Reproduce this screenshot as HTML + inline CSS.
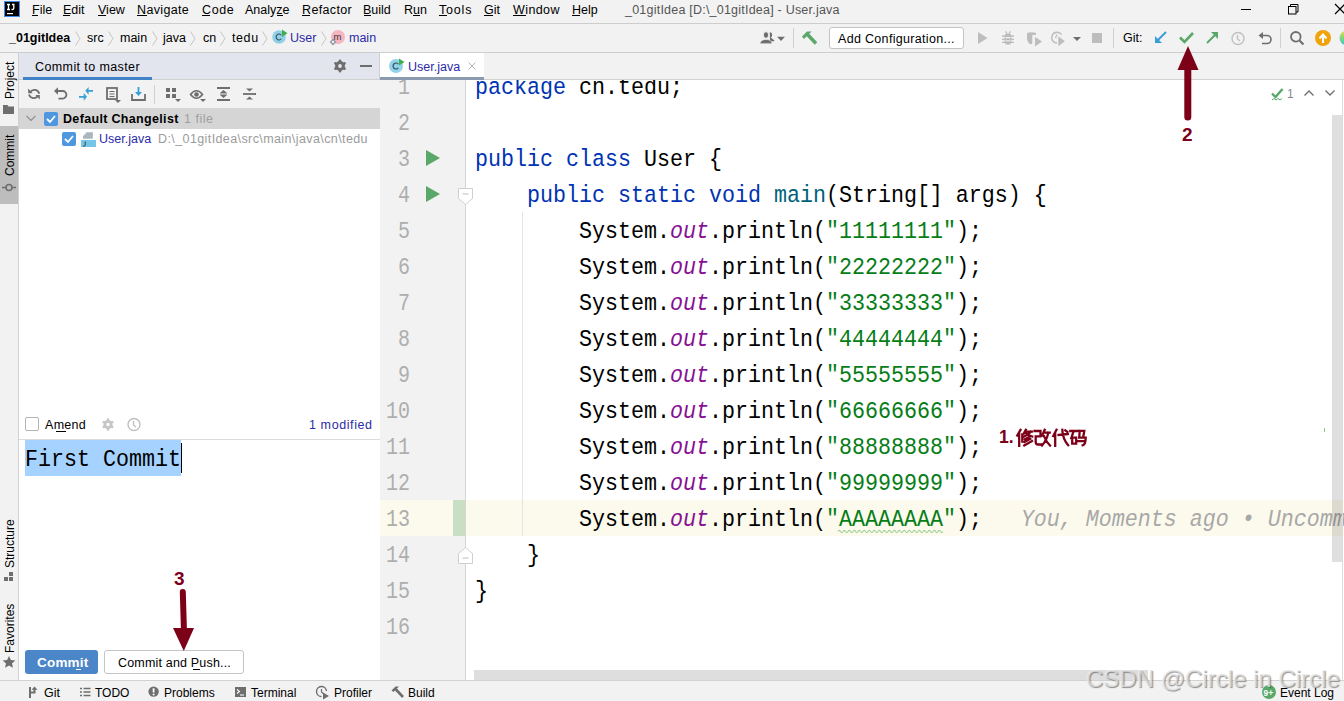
<!DOCTYPE html>
<html><head><meta charset="utf-8">
<style>
*{margin:0;padding:0;box-sizing:border-box}
html,body{width:1344px;height:701px;overflow:hidden;background:#f2f2f2;font-family:"Liberation Sans",sans-serif;font-size:12px;color:#000}
.a{position:absolute}
.t{position:absolute;white-space:pre;line-height:1}
svg{position:absolute;overflow:visible}
.ul{text-decoration:underline;text-underline-offset:2px}
.code{position:absolute;font-family:"Liberation Mono",monospace;font-size:21.67px;white-space:pre;line-height:36px;height:36px;transform:scaleY(1.1);transform-origin:0 23.8px}
.ln{position:absolute;left:379px;width:30px;text-align:right;color:#aeaeae;font-family:"Liberation Mono",monospace;font-size:20px;line-height:36px;height:36px;transform:scaleY(1.22);transform-origin:0 23.3px}
.kw{color:#0033b3}
.st{color:#067d17}
.it{color:#871094;font-style:italic}
</style></head><body>
<!-- menubar -->
<div class="a" style="left:0;top:0;width:1344px;height:24px;background:#f2f2f2;border-bottom:1px solid #cdcdcd"></div>
<div class="a" style="left:4px;top:1px;width:16px;height:16px;background:#000;border:1px solid #3c8cf0"></div>
<svg style="left:5px;top:2px" width="14" height="14"><path d="M2 2.5H5M3.5 2.5V7.5M2 7.5H5M7 2.5H9.5M8.8 2.5V6.3Q8.8 7.5 7.3 7.5H6.5" fill="none" stroke="#fff" stroke-width="1.3"/><rect x="2" y="11" width="6" height="1.2" fill="#fff"/></svg>
<div class="t" style="left:32px;top:4px;font-size:12.5px">File</div>
<div class="t" style="left:63px;top:4px;font-size:12.5px">Edit</div>
<div class="t" style="left:98px;top:4px;font-size:12.5px">View</div>
<div class="t" style="left:137px;top:4px;font-size:12.5px;letter-spacing:0.35px">Navigate</div>
<div class="t" style="left:202px;top:4px;font-size:12.5px;letter-spacing:0.6px">Code</div>
<div class="t" style="left:245px;top:4px;font-size:12.5px">Analyze</div>
<div class="t" style="left:302px;top:4px;font-size:12.5px;letter-spacing:0.35px">Refactor</div>
<div class="t" style="left:363px;top:4px;font-size:12.5px">Build</div>
<div class="t" style="left:404px;top:4px;font-size:12.5px">Run</div>
<div class="t" style="left:439px;top:4px;font-size:12.5px;letter-spacing:0.8px">Tools</div>
<div class="t" style="left:484px;top:4px;font-size:12.5px">Git</div>
<div class="t" style="left:513px;top:4px;font-size:12.5px;letter-spacing:0.4px">Window</div>
<div class="t" style="left:572px;top:4px;font-size:12.5px">Help</div>
<div class="t" style="left:625px;top:4px;font-size:12.5px;color:#555;letter-spacing:0.22px">_01gitIdea [D:\_01gitIdea] - User.java</div>
<div class="a" style="left:32px;top:15px;width:6px;height:1px;background:#000"></div><div class="a" style="left:63px;top:15px;width:7px;height:1px;background:#000"></div><div class="a" style="left:98px;top:15px;width:8px;height:1px;background:#000"></div><div class="a" style="left:137px;top:15px;width:10px;height:1px;background:#000"></div><div class="a" style="left:202px;top:15px;width:8px;height:1px;background:#000"></div><div class="a" style="left:277px;top:15px;width:6px;height:1px;background:#000"></div><div class="a" style="left:302px;top:15px;width:8px;height:1px;background:#000"></div><div class="a" style="left:364px;top:15px;width:7px;height:1px;background:#000"></div><div class="a" style="left:413px;top:15px;width:7px;height:1px;background:#000"></div><div class="a" style="left:439px;top:15px;width:8px;height:1px;background:#000"></div><div class="a" style="left:484px;top:15px;width:9px;height:1px;background:#000"></div><div class="a" style="left:513px;top:15px;width:13px;height:1px;background:#000"></div><div class="a" style="left:572px;top:15px;width:8px;height:1px;background:#000"></div>
<!-- window controls -->
<div class="a" style="left:1241px;top:9px;width:10px;height:1px;background:#000"></div>
<svg style="left:1288px;top:4px" width="11" height="11"><rect x="0.5" y="2.5" width="7.5" height="7.5" fill="none" stroke="#000"/><path d="M2.5 2.5V0.5h7.5v7.5h-2" fill="none" stroke="#000"/></svg>
<svg style="left:1335px;top:4px" width="12" height="12"><path d="M0 0L10 10M10 0L0 10" stroke="#000" stroke-width="1.2"/></svg>

<!-- nav bar -->
<div class="a" style="left:0;top:24px;width:1344px;height:29px;background:#f2f2f2;border-bottom:1px solid #cdcdcd"></div>
<div class="t" style="left:9px;top:32px;font-size:12.5px;font-weight:bold">_01gitIdea</div>
<div class="t" style="left:87px;top:32px;font-size:12.5px">src</div>
<div class="t" style="left:120px;top:32px;font-size:12.5px">main</div>
<div class="t" style="left:163px;top:32px;font-size:12.5px">java</div>
<div class="t" style="left:203px;top:32px;font-size:12.5px">cn</div>
<div class="t" style="left:232px;top:32px;font-size:12.5px;letter-spacing:0.6px">tedu</div>
<div class="t" style="left:290px;top:32px;font-size:12.5px;color:#2b2ba6">User</div>
<div class="t" style="left:349px;top:32px;font-size:12.5px;color:#2b2ba6">main</div>
<svg style="left:75px;top:31px" width="6" height="16"><path d="M0.5 0.5L5 7.5L0.5 14.5" fill="none" stroke="#c4c4c4"/></svg>
<svg style="left:108px;top:31px" width="6" height="16"><path d="M0.5 0.5L5 7.5L0.5 14.5" fill="none" stroke="#c4c4c4"/></svg>
<svg style="left:152px;top:31px" width="6" height="16"><path d="M0.5 0.5L5 7.5L0.5 14.5" fill="none" stroke="#c4c4c4"/></svg>
<svg style="left:190px;top:31px" width="6" height="16"><path d="M0.5 0.5L5 7.5L0.5 14.5" fill="none" stroke="#c4c4c4"/></svg>
<svg style="left:220px;top:31px" width="6" height="16"><path d="M0.5 0.5L5 7.5L0.5 14.5" fill="none" stroke="#c4c4c4"/></svg>
<svg style="left:262px;top:31px" width="6" height="16"><path d="M0.5 0.5L5 7.5L0.5 14.5" fill="none" stroke="#c4c4c4"/></svg>
<svg style="left:321px;top:31px" width="6" height="16"><path d="M0.5 0.5L5 7.5L0.5 14.5" fill="none" stroke="#c4c4c4"/></svg>
<svg style="left:272px;top:29px" width="16" height="16"><circle cx="7" cy="8" r="6.8" fill="#8fcfe8"/><path d="M9.2 6.2A2.8 3 0 1 0 9.2 9.8" fill="none" stroke="#3d4a55" stroke-width="1.1"/><path d="M10 0.5v7.5l5.5-3.7z" fill="#3fae4f"/></svg>
<svg style="left:330px;top:29px" width="16" height="16"><circle cx="8" cy="8" r="7" fill="#f5b4c0"/><text x="3.6" y="11" font-size="9.5" font-family="Liberation Sans" fill="#3a3a3a">m</text><path d="M3 10.5L5.5 13L3 15.5L0.5 13z" fill="#f2f2f2" stroke="#8f9aa5" stroke-width="1.3"/></svg>

<!-- right toolbar -->
<svg style="left:760px;top:31px" width="26" height="14"><path d="M9.8 1.2c1.6 0 2.4 1.3 2.3 2.9-.1 1.3-.7 2.2-1.2 2.6l3 2.2c.7.5.6 1.3-.2 1.3H10z" fill="#6e6e6e"/><ellipse cx="6" cy="4" rx="2.6" ry="3.3" fill="#6e6e6e" stroke="#f2f2f2" stroke-width="0.9"/><path d="M0 12.8c0-2.8 2.5-4.3 6-4.3s6 1.5 6 4.3z" fill="#6e6e6e" stroke="#f2f2f2" stroke-width="0.7"/><path d="M17 5.7h8l-4 4.3z" fill="#6e6e6e"/></svg>
<div class="a" style="left:793px;top:28px;width:1px;height:20px;background:#d0d0d0"></div>
<svg style="left:801px;top:30px" width="17" height="16"><path d="M1 6.5L6 1.5H10.5L9.5 2.5L7.5 4.5L5.5 6.5L3 9z" fill="#59a869"/><path d="M6.5 4.5L15 13.5" stroke="#59a869" stroke-width="3.4"/></svg>
<div class="a" style="left:829px;top:27px;width:135px;height:22px;background:#fff;border:1px solid #c4c4c4;border-radius:3px"></div>
<div class="t" style="left:838px;top:33px;font-size:12.5px;letter-spacing:0.32px">Add Configuration...</div>
<svg style="left:978px;top:32px" width="10" height="12"><path d="M0 0v12l9.5-6z" fill="#bdbdbd"/></svg>
<svg style="left:1002px;top:31px" width="12" height="14"><path d="M3.5 0.3L5 3M8.5 0.3L7 3" stroke="#bdbdbd" stroke-width="1.2"/><rect x="2.5" y="2.5" width="7" height="11.3" rx="3.2" fill="#bdbdbd"/><path d="M0 5h12M0 8.3h12M0 11.4h12" stroke="#bdbdbd" stroke-width="1.3"/><path d="M3.5 6.6h5M3.5 9.8h5" stroke="#f2f2f2" stroke-width="1.1"/></svg>
<svg style="left:1026px;top:32px" width="17" height="15"><path d="M1 1Q5.5 -0.5 10 1V3H6.3V11.5L4.5 12.5Q1 10 1 6z" fill="#bdbdbd"/><path d="M9 5v9.5l7-5z" fill="#bdbdbd"/></svg>
<svg style="left:1050px;top:30px" width="32" height="18"><path d="M11.6 4.6A5.4 5.4 0 1 0 7 13" fill="none" stroke="#bdbdbd" stroke-width="1.5"/><path d="M7 4.6L5.5 8" stroke="#bdbdbd" stroke-width="1.2" fill="none"/><path d="M8.3 6.3v10l6.6-5z" fill="#bdbdbd"/><path d="M23 7h8l-4 4z" fill="#6e6e6e"/></svg>
<div class="a" style="left:1092px;top:33px;width:10px;height:10px;background:#bdbdbd"></div>
<div class="a" style="left:1113px;top:28px;width:1px;height:20px;background:#d0d0d0"></div>
<div class="t" style="left:1123px;top:32px;font-size:12.5px">Git:</div>
<svg style="left:1154px;top:31px" width="14" height="13"><path d="M12 1L2 11" stroke="#389fd6" stroke-width="2"/><path d="M1 5v7h7z" fill="#389fd6"/></svg>
<svg style="left:1179px;top:31px" width="15" height="13"><path d="M1 6.5l4.5 4.5L14 2" fill="none" stroke="#59a869" stroke-width="2.6"/></svg>
<svg style="left:1206px;top:31px" width="13" height="13"><path d="M1 12L11 2" stroke="#59a869" stroke-width="2"/><path d="M5 1h7v7z" fill="#59a869"/></svg>
<svg style="left:1231px;top:31px" width="15" height="15"><circle cx="7" cy="7.5" r="6" fill="none" stroke="#c0c0c0" stroke-width="1.4"/><path d="M6.5 4v4l2.5 2" stroke="#c0c0c0" stroke-width="1.4" fill="none"/></svg>
<svg style="left:1258px;top:31px" width="14" height="15"><path d="M4 4.5h5a4 4 0 010 8H4" fill="none" stroke="#6e6e6e" stroke-width="1.6"/><path d="M0.5 4.5L5 1v7z" fill="#6e6e6e"/></svg>
<div class="a" style="left:1280px;top:28px;width:1px;height:20px;background:#d0d0d0"></div>
<svg style="left:1290px;top:31px" width="15" height="15"><circle cx="5.8" cy="5.8" r="4.8" fill="none" stroke="#6e6e6e" stroke-width="1.8"/><path d="M9.5 9.5L13.5 13.5" stroke="#6e6e6e" stroke-width="2.2"/></svg>
<svg style="left:1315px;top:30px" width="16" height="16"><circle cx="8" cy="8" r="8" fill="#f0a30a"/><path d="M8 13V5M4.5 8.5L8 4.5l3.5 4" stroke="#fff" stroke-width="2" fill="none"/></svg>
<svg style="left:1339px;top:30px" width="8" height="16"><defs><linearGradient id="rg" x1="0" y1="0" x2="0" y2="1"><stop offset="0" stop-color="#e8e04a"/><stop offset="0.5" stop-color="#7ed67a"/><stop offset="1" stop-color="#3cc6e0"/></linearGradient></defs><circle cx="8" cy="8" r="7.5" fill="url(#rg)"/></svg>

<!-- left strip -->
<div class="a" style="left:0;top:53px;width:19px;height:628px;background:#f2f2f2;border-right:1px solid #d1d1d1"></div>
<div class="a" style="left:0;top:126px;width:18px;height:78px;background:#bdbdbd"></div>
<div class="t" style="left:14px;top:61px;font-size:12px;transform-origin:0 0;transform:rotate(-90deg) translate(-38px,-10px)">Project</div>
<svg style="left:3px;top:105px" width="11" height="9"><path d="M0 0h4.5l1 1.5h5.5v7.5H0z" fill="#6e6e6e"/></svg>
<div class="t" style="left:14px;top:135px;font-size:12px;transform-origin:0 0;transform:rotate(-90deg) translate(-41px,-10px)">Commit</div>
<svg style="left:2px;top:183px" width="14" height="9"><circle cx="7" cy="4.5" r="3" fill="none" stroke="#6e6e6e" stroke-width="1.6"/><path d="M0 4.5h4M10 4.5h4" stroke="#6e6e6e" stroke-width="1.6"/></svg>
<div class="t" style="left:14px;top:518px;font-size:12px;transform-origin:0 0;transform:rotate(-90deg) translate(-50px,-10px)">Structure</div>
<svg style="left:4px;top:572px" width="10" height="10"><rect x="0" y="5" width="4" height="4" fill="#6e6e6e"/><rect x="5" y="5" width="4" height="4" fill="#6e6e6e"/><rect x="5" y="0" width="4" height="4" fill="#6e6e6e"/></svg>
<div class="t" style="left:14px;top:604px;font-size:12px;transform-origin:0 0;transform:rotate(-90deg) translate(-49px,-10px)">Favorites</div>
<svg style="left:2px;top:656px" width="14" height="12"><path d="M7 0l1.9 4.1 4.4.4-3.3 2.9 1 4.3L7 9.5l-4 2.2 1-4.3L0.7 4.5l4.4-.4z" fill="#6e6e6e"/></svg>

<!-- commit panel -->
<div class="a" style="left:19px;top:53px;width:360px;height:27px;background:#e2e5ee;border-bottom:1px solid #d1d1d1"></div><div class="a" style="left:379px;top:53px;width:1px;height:627px;background:#d1d1d1"></div>
<div class="t" style="left:35px;top:61px;font-size:12.5px;letter-spacing:0.4px">Commit to master</div>
<div class="a" style="left:23px;top:77px;width:129px;height:3px;background:#4083c9"></div>
<svg style="left:333px;top:59px" width="14" height="14"><circle cx="7" cy="7" r="4.9" fill="#6e6e6e"/><path d="M7.00 3.80L7.00 1.70M4.23 5.40L2.41 4.35M4.23 8.60L2.41 9.65M7.00 10.20L7.00 12.30M9.77 8.60L11.59 9.65M9.77 5.40L11.59 4.35" stroke="#6e6e6e" stroke-width="2.6" stroke-linecap="round"/><circle cx="7" cy="7" r="1.9" fill="#e2e5ee"/></svg>
<div class="a" style="left:360px;top:65px;width:12px;height:2px;background:#6e6e6e"></div>
<div class="a" style="left:19px;top:80px;width:361px;height:28px;background:#f2f2f2"></div>
<svg style="left:28px;top:88px" width="13" height="13"><path d="M2.2 4A5 5 0 0 1 11.2 5.8M1 6.6A5 5 0 0 0 9.6 8.4" fill="none" stroke="#6e6e6e" stroke-width="1.7"/><path d="M0.2 0.6V5.2H4.6z M11.8 11.6V7H7.4z" fill="#6e6e6e"/></svg>
<svg style="left:54px;top:87px" width="14" height="14"><path d="M3 4H8.6A3.8 3.8 0 0 1 8.6 11.6H4.5" fill="none" stroke="#6e6e6e" stroke-width="1.8"/><path d="M0 4L4 0.3V7.7z" fill="#6e6e6e"/></svg>
<svg style="left:78px;top:86px" width="16" height="16"><path d="M15 4.8H9M1 10.8H7" stroke="#389fd6" stroke-width="1.8"/><path d="M7.3 4.8L10.6 1V8.8z M9 10.8L5.7 7V14.8z" fill="#389fd6"/></svg>
<svg style="left:106px;top:87px" width="15" height="16"><rect x="1" y="1" width="10" height="11" fill="none" stroke="#6e6e6e" stroke-width="1.8"/><path d="M3.5 4.5h5M3.5 7h5M3.5 9.5h5" stroke="#6e6e6e" stroke-width="1.2"/><path d="M9 13h6l-3 3z" fill="#6e6e6e"/></svg>
<svg style="left:131px;top:87px" width="15" height="14"><path d="M7.5 0v7" stroke="#389fd6" stroke-width="1.8"/><path d="M4 5h7l-3.5 4z" fill="#389fd6"/><path d="M1 7v6h13V7" fill="none" stroke="#6e6e6e" stroke-width="1.8"/></svg>
<div class="a" style="left:154px;top:85px;width:1px;height:19px;background:#d0d0d0"></div>
<svg style="left:166px;top:88px" width="16" height="16"><rect x="0" y="0" width="4" height="4" fill="#6e6e6e"/><rect x="6" y="0" width="4" height="4" fill="#6e6e6e"/><rect x="0" y="6" width="4" height="4" fill="#6e6e6e"/><rect x="6" y="6" width="4" height="4" fill="#6e6e6e"/><path d="M9 11h6l-3 3z" fill="#6e6e6e"/></svg>
<svg style="left:190px;top:88px" width="17" height="16"><path d="M0.5 6.5Q6.5 -1 12.5 6.5Q6.5 14 0.5 6.5z" fill="none" stroke="#6e6e6e" stroke-width="1.6"/><circle cx="6.5" cy="6.5" r="2.3" fill="#6e6e6e"/><path d="M10 11h6l-3 3z" fill="#6e6e6e"/></svg>
<svg style="left:217px;top:87px" width="13" height="14"><path d="M0 1h13M0 13h13" stroke="#6e6e6e" stroke-width="1.8"/><path d="M3 6l3.5-3 3.5 3zM3 8l3.5 3 3.5-3z" fill="#6e6e6e"/><path d="M3 7h7" stroke="#6e6e6e" stroke-width="1"/></svg>
<svg style="left:243px;top:87px" width="13" height="14"><path d="M0 7h13" stroke="#6e6e6e" stroke-width="1.8"/><path d="M3 1.5l3.5 3 3.5-3zM3 12.5l3.5-3 3.5 3z" fill="#6e6e6e"/></svg>

<div class="a" style="left:19px;top:108px;width:361px;height:573px;background:#fff"></div>
<div class="a" style="left:19px;top:108px;width:361px;height:21px;background:#d5d5d5"></div>
<svg style="left:26px;top:115px" width="11" height="7"><path d="M0.5 0.8l4.5 4.5 4.5-4.5" fill="none" stroke="#8c8c8c" stroke-width="1.2"/></svg>
<div class="a" style="left:44px;top:112px;width:14px;height:14px;background:#4f98e0;border-radius:2px"></div>
<svg style="left:44px;top:112px" width="14" height="14"><path d="M3 7l3 3 5-6" fill="none" stroke="#fff" stroke-width="1.8"/></svg>
<div class="t" style="left:63px;top:113px;font-size:12.5px;font-weight:bold;letter-spacing:0.33px">Default Changelist</div>
<div class="t" style="left:184px;top:113px;font-size:12.5px;color:#a0a0a0;letter-spacing:0.5px">1 file</div>
<div class="a" style="left:62px;top:132px;width:14px;height:14px;background:#4f98e0;border-radius:2px"></div>
<svg style="left:62px;top:132px" width="14" height="14"><path d="M3 7l3 3 5-6" fill="none" stroke="#fff" stroke-width="1.8"/></svg>
<svg style="left:81px;top:132px" width="16" height="16"><path d="M2 4L5.5 0.2H11.8V6.8H2z" fill="#aab5be"/><path d="M2.5 3.8L5 1" stroke="#e8ecef" stroke-width="0.8"/><rect x="0" y="8" width="15" height="7" fill="#74c6e6"/><path d="M4.2 9.5V13.2Q4.2 14.2 3 14.2H2.2" fill="none" stroke="#3a3f45" stroke-width="1"/></svg>
<div class="t" style="left:99px;top:133px;font-size:12.5px;color:#2b2ba6">User.java</div>
<div class="t" style="left:158px;top:133px;font-size:12.5px;color:#9b9b9b;letter-spacing:0.4px">D:\_01gitIdea\src\main\java\cn\tedu</div>

<!-- amend row -->
<div class="a" style="left:25px;top:417px;width:14px;height:14px;background:#fff;border:1px solid #b3b3b3;border-radius:2px"></div>
<div class="t" style="left:45px;top:419px;font-size:12.5px;letter-spacing:0.3px">Amend</div>
<div class="a" style="left:56px;top:431px;width:10px;height:1px;background:#000"></div>
<svg style="left:101px;top:418px" width="14" height="14"><circle cx="7" cy="6.5" r="4.6" fill="#c6c6c6"/><path d="M7.00 3.50L7.00 1.50M4.40 5.00L2.67 4.00M4.40 8.00L2.67 9.00M7.00 9.50L7.00 11.50M9.60 8.00L11.33 9.00M9.60 5.00L11.33 4.00" stroke="#c6c6c6" stroke-width="2.4" stroke-linecap="round"/><circle cx="7" cy="6.5" r="1.7" fill="#fff"/></svg>
<svg style="left:127px;top:417px" width="15" height="15"><circle cx="7" cy="7.5" r="6" fill="none" stroke="#c0c0c0" stroke-width="1.4"/><path d="M6.5 4v4l2.5 2" stroke="#c0c0c0" stroke-width="1.4" fill="none"/></svg>
<div class="t" style="left:309px;top:419px;font-size:12.5px;color:#2b2ba6;letter-spacing:0.6px">1 modified</div>
<div class="a" style="left:19px;top:439px;width:361px;height:1px;background:#dcdcdc"></div>
<div class="a" style="left:25px;top:440px;width:156px;height:36px;background:#a6d2ff"></div>
<div class="code" style="left:25px;top:443px;color:#000">First Commit</div>
<div class="a" style="left:181px;top:443px;width:1px;height:30px;background:#000"></div>

<!-- buttons -->
<div class="a" style="left:25px;top:650px;width:73px;height:24px;background:#4a86c8;border-radius:3px"></div>
<div class="t" style="left:37px;top:656px;font-size:13.5px;font-weight:bold;color:#fff;letter-spacing:0.2px">Commit</div><div class="a" style="left:76px;top:669px;width:5px;height:1px;background:#fff"></div>
<div class="a" style="left:104px;top:650px;width:140px;height:24px;background:#fff;border:1px solid #c4c4c4;border-radius:3px"></div>
<div class="t" style="left:118px;top:657px;font-size:12.5px;letter-spacing:0.18px">Commit and Push...</div><div class="a" style="left:193px;top:669px;width:7px;height:1px;background:#000"></div>

<!-- editor tabs -->
<div class="a" style="left:380px;top:53px;width:964px;height:27px;background:#f2f2f2;border-bottom:1px solid #d1d1d1"></div>
<div class="a" style="left:380px;top:53px;width:104px;height:24px;background:#fff"></div>
<div class="a" style="left:380px;top:77px;width:104px;height:3px;background:#8a9bb0"></div>
<svg style="left:389px;top:58px" width="16" height="16"><circle cx="7" cy="8" r="7" fill="#8fd3ec"/><path d="M9.3 6.2A2.9 3 0 1 0 9.3 9.8" fill="none" stroke="#3d4a55" stroke-width="1.2"/><path d="M10 0.5v7l5.5-3.5z" fill="#3fae4f"/></svg>
<div class="t" style="left:408px;top:61px;font-size:12.5px;color:#2b2ba6">User.java</div>
<svg style="left:468px;top:62px" width="9" height="9"><path d="M0.5 0.5l7 7M7.5 0.5l-7 7" stroke="#b8b8b8" stroke-width="1"/></svg>

<!-- editor -->
<div class="a" style="left:380px;top:80px;width:86px;height:600px;background:#f2f2f2"></div>
<div class="a" style="left:465px;top:80px;width:1px;height:600px;background:#d5d5d5"></div>
<div class="a" style="left:466px;top:80px;width:878px;height:600px;background:#fff"></div>
<div class="a" style="left:380px;top:500px;width:964px;height:36px;background:#fcfaed"></div>
<div class="a" style="left:453px;top:500px;width:12px;height:36px;background:#c9dfc4"></div>
<div class="a" style="left:465px;top:500px;width:1px;height:36px;background:#d5d5d5"></div>
<div class="a" style="left:522px;top:212px;width:1px;height:324px;background:#e4e4e4"></div>

<div id="ed" class="a" style="left:0;top:80px;width:1344px;height:600px;overflow:hidden">
<div class="a" style="left:1px;top:-77px;width:1344px;height:701px">
<div class="ln" style="top:68px">1</div>
<div class="ln" style="top:104px">2</div>
<div class="ln" style="top:140px">3</div>
<div class="ln" style="top:176px">4</div>
<div class="ln" style="top:212px">5</div>
<div class="ln" style="top:248px">6</div>
<div class="ln" style="top:284px">7</div>
<div class="ln" style="top:320px">8</div>
<div class="ln" style="top:356px">9</div>
<div class="ln" style="top:392px">10</div>
<div class="ln" style="top:428px">11</div>
<div class="ln" style="top:464px">12</div>
<div class="ln" style="top:500px">13</div>
<div class="ln" style="top:536px">14</div>
<div class="ln" style="top:572px">15</div>
<div class="ln" style="top:608px">16</div>
<div class="code" style="left:474px;top:68px"><span class="kw">package</span> cn.tedu;</div>
<div class="code" style="left:474px;top:140px"><span class="kw">public class</span> User {</div>
<div class="code" style="left:474px;top:176px">    <span class="kw">public static void</span> <span style="color:#00627a">main</span>(String[] args) {</div>
<div class="code" style="left:474px;top:212px">        System.<span class="it">out</span>.println(<span class="st">"11111111"</span>);</div>
<div class="code" style="left:474px;top:248px">        System.<span class="it">out</span>.println(<span class="st">"22222222"</span>);</div>
<div class="code" style="left:474px;top:284px">        System.<span class="it">out</span>.println(<span class="st">"33333333"</span>);</div>
<div class="code" style="left:474px;top:320px">        System.<span class="it">out</span>.println(<span class="st">"44444444"</span>);</div>
<div class="code" style="left:474px;top:356px">        System.<span class="it">out</span>.println(<span class="st">"55555555"</span>);</div>
<div class="code" style="left:474px;top:392px">        System.<span class="it">out</span>.println(<span class="st">"66666666"</span>);</div>
<div class="code" style="left:474px;top:428px">        System.<span class="it">out</span>.println(<span class="st">"88888888"</span>);</div>
<div class="code" style="left:474px;top:464px">        System.<span class="it">out</span>.println(<span class="st">"99999999"</span>);</div>
<div class="code" style="left:474px;top:500px">        System.<span class="it">out</span>.println(<span class="st">"AAAAAAAA"</span>);   <span style="color:#a8a8a8;font-style:italic">You, Moments ago • Uncommitted changes</span></div>
<div class="code" style="left:474px;top:536px">    }</div>
<div class="code" style="left:474px;top:572px">}</div>
</div>
</div>
<!-- run icons -->
<svg style="left:426px;top:150px" width="14" height="16"><path d="M0 0v16l14-8z" fill="#59a869"/></svg>
<svg style="left:426px;top:186px" width="14" height="16"><path d="M0 0v16l14-8z" fill="#59a869"/></svg>
<!-- fold markers -->
<svg style="left:458px;top:188px" width="16" height="20"><path d="M0.5 0.5h14v10l-7 6-7-6z" fill="#fff" stroke="#cfcfcf"/><path d="M4.5 6h6" stroke="#bdbdbd"/></svg>
<svg style="left:458px;top:544px" width="16" height="20"><path d="M0.5 19.5h14v-10l-7-6-7 6z" fill="#fff" stroke="#cfcfcf"/><path d="M4.5 14h6" stroke="#bdbdbd"/></svg>
<!-- wavy underline under AAAAAAAA -->
<svg style="left:838px;top:529px" width="106" height="5"><path d="M0 2.5 Q1.2 0.3 2.5 2.5 Q3.8 4.7 5.0 2.5 Q6.2 0.3 7.5 2.5 Q8.8 4.7 10.0 2.5 Q11.2 0.3 12.5 2.5 Q13.8 4.7 15.0 2.5 Q16.2 0.3 17.5 2.5 Q18.8 4.7 20.0 2.5 Q21.2 0.3 22.5 2.5 Q23.8 4.7 25.0 2.5 Q26.2 0.3 27.5 2.5 Q28.8 4.7 30.0 2.5 Q31.2 0.3 32.5 2.5 Q33.8 4.7 35.0 2.5 Q36.2 0.3 37.5 2.5 Q38.8 4.7 40.0 2.5 Q41.2 0.3 42.5 2.5 Q43.8 4.7 45.0 2.5 Q46.2 0.3 47.5 2.5 Q48.8 4.7 50.0 2.5 Q51.2 0.3 52.5 2.5 Q53.8 4.7 55.0 2.5 Q56.2 0.3 57.5 2.5 Q58.8 4.7 60.0 2.5 Q61.2 0.3 62.5 2.5 Q63.8 4.7 65.0 2.5 Q66.2 0.3 67.5 2.5 Q68.8 4.7 70.0 2.5 Q71.2 0.3 72.5 2.5 Q73.8 4.7 75.0 2.5 Q76.2 0.3 77.5 2.5 Q78.8 4.7 80.0 2.5 Q81.2 0.3 82.5 2.5 Q83.8 4.7 85.0 2.5 Q86.2 0.3 87.5 2.5 Q88.8 4.7 90.0 2.5 Q91.2 0.3 92.5 2.5 Q93.8 4.7 95.0 2.5 Q96.2 0.3 97.5 2.5 Q98.8 4.7 100.0 2.5 Q101.2 0.3 102.5 2.5 Q103.8 4.7 105.0 2.5" fill="none" stroke="#a9d3a0" stroke-width="1.1"/></svg>
<!-- editor top right -->
<svg style="left:1271px;top:88px" width="13" height="13"><path d="M1 5.5l3.5 3.5L11.5 1" fill="none" stroke="#59a869" stroke-width="2.4"/><path d="M1 12l2-1.5 2 1.5 2-1.5 2 1.5 2-1.5" fill="none" stroke="#59a869" stroke-width="1"/></svg>
<div class="t" style="left:1287px;top:88px;font-size:12px;color:#888">1</div>
<svg style="left:1304px;top:90px" width="10" height="6"><path d="M0.5 5.5l4.5-4.5 4.5 4.5" fill="none" stroke="#6e6e6e" stroke-width="1.4"/></svg>
<svg style="left:1325px;top:90px" width="10" height="6"><path d="M0.5 0.5l4.5 4.5 4.5-4.5" fill="none" stroke="#6e6e6e" stroke-width="1.4"/></svg>
<div class="a" style="left:1342px;top:80px;width:1px;height:600px;background:#dcdcdc"></div>
<div class="a" style="left:1332px;top:115px;width:10px;height:447px;background:rgba(0,0,0,0.125)"></div>
<div class="a" style="left:1324px;top:428px;width:1px;height:4px;background:#8cc98c"></div>
<div class="a" style="left:474px;top:670px;width:674px;height:10px;background:#dedede"></div>

<!-- annotations -->
<svg style="left:0;top:0" width="1344" height="701">
<path d="M1188 46L1177.5 70H1198.5z" fill="#7d0019"/>
<path d="M1187.8 66V117" stroke="#7d0019" stroke-width="7" stroke-linecap="round"/>
<path d="M182.8 592L184 632" stroke="#7d0019" stroke-width="6" stroke-linecap="round"/>
<path d="M173 628L194 628L183.8 651z" fill="#7d0019"/>
</svg>
<div class="t" style="left:1182px;top:125px;font-size:19px;font-weight:bold;color:#7d0019">2</div>
<div class="t" style="left:174px;top:569px;font-size:19px;font-weight:bold;color:#7d0019">3</div>
<div class="t" style="left:999px;top:429px;font-size:17.5px;font-weight:bold;color:#7d0019">1.</div>
<svg style="left:1016px;top:429px" width="72" height="18"><g fill="none" stroke="#7d0019" stroke-width="2.3" stroke-linecap="square" stroke-linejoin="miter">
<path d="M4.5 0.8L1.2 6.5M3.2 4.5V16.8M6.3 5.5V12.5M9.8 0.8L7.8 4.5M9.3 2.6H15.8M14.8 2.6Q12.5 6 7.8 7.6M10.3 4.3Q12.8 6.6 16.2 7.5M12.5 8.3L8.8 10.2M14.3 9.8L8.5 13M16 12L8.3 16.5"/>
<path transform="translate(17.5,0)" d="M1 2H7V7.3H2.2V13Q2.2 15.5 4.5 15.5H7.5M11.2 0.8L8.8 6.3M10.2 3.6H16.2M14.8 3.6Q13.3 11.3 8.5 16.5M10.6 7.3Q12.8 13 16.5 16.5"/>
<path transform="translate(36,0)" d="M4.5 0.8L1.2 7M3.2 5V16.8M6.5 6L15.8 5M10.3 0.8Q10.8 10.5 16.2 16.2M13.3 1.3L15.3 3"/>
<path transform="translate(53.5,0)" d="M0.8 2H7.3M4.2 2L1.7 9.3M2.7 8.6H6.7V14.6H2.7z M8.8 1.8H14.8L13.8 7.5M10.2 1.8L9.7 8.6H16.2Q16.2 15.8 13.2 16.3M8.8 12.2H14.3"/>
</g></svg>

<!-- status bar -->
<div class="a" style="left:0;top:680px;width:1344px;height:21px;background:#f2f2f2;border-top:1px solid #d1d1d1"></div>
<svg style="left:28px;top:686px" width="12" height="12"><path d="M2 1v11M2 6.5h4.5V3" fill="none" stroke="#6e6e6e" stroke-width="2"/><path d="M3.5 3.8L6.5 0.5l3 3.3z" fill="#6e6e6e"/></svg>
<div class="t" style="left:44px;top:687px;font-size:12.5px">Git</div>
<svg style="left:80px;top:687px" width="11" height="10"><path d="M0 1.5h2M0 5h2M0 8.5h2M3.5 1.5h7M3.5 5h7M3.5 8.5h7" stroke="#6e6e6e" stroke-width="1.6"/></svg>
<div class="t" style="left:95px;top:687px;font-size:12px">TODO</div>
<svg style="left:148px;top:686px" width="12" height="12"><circle cx="5.6" cy="5.6" r="5.2" fill="#6e6e6e"/><path d="M5.6 2.3v4.2" stroke="#fff" stroke-width="1.8"/><circle cx="5.6" cy="8.4" r="1" fill="#fff"/></svg>
<div class="t" style="left:164px;top:687px;font-size:12px">Problems</div>
<svg style="left:235px;top:687px" width="12" height="11"><rect x="0" y="0" width="11" height="10" fill="#6e6e6e"/><path d="M2 2.5l2.5 2L2 6.5M5 8h4" stroke="#fff" stroke-width="1.1" fill="none"/></svg>
<div class="t" style="left:251px;top:687px;font-size:12px">Terminal</div>
<svg style="left:316px;top:686px" width="14" height="14"><path d="M10.5 5A5 5 0 1 0 5.5 10.5" fill="none" stroke="#6e6e6e" stroke-width="1.4"/><path d="M5.5 3v3l1.5 1.5" stroke="#6e6e6e" stroke-width="1.2" fill="none"/><path d="M7 6.5v7l6-3.5z" fill="#6e6e6e"/></svg>
<div class="t" style="left:334px;top:687px;font-size:12px">Profiler</div>
<svg style="left:391px;top:686px" width="14" height="13"><path d="M0.5 4.5L4.5 0.5H8L6.5 2L4 4.5L2.5 6z" fill="#6e6e6e"/><path d="M4.5 3L12 11" stroke="#6e6e6e" stroke-width="2.6"/></svg>
<div class="t" style="left:408px;top:687px;font-size:12px">Build</div>
<svg style="left:1262px;top:685px" width="14" height="14"><circle cx="7" cy="7" r="7" fill="#59a869"/><text x="1.5" y="10.5" font-size="8.5" fill="#fff" font-family="Liberation Sans" font-weight="bold">9+</text></svg>
<div class="t" style="left:1280px;top:687px;font-size:12px">Event Log</div>
<!-- watermark -->
<div class="t" style="left:1086px;top:667px;font-size:24px;color:rgba(225,225,225,0.75);text-shadow:1px 1px 1px rgba(60,60,60,0.55),-0.5px -0.5px 0.5px rgba(255,255,255,0.6)">CSDN @Circle in Circle</div>
</body></html>
